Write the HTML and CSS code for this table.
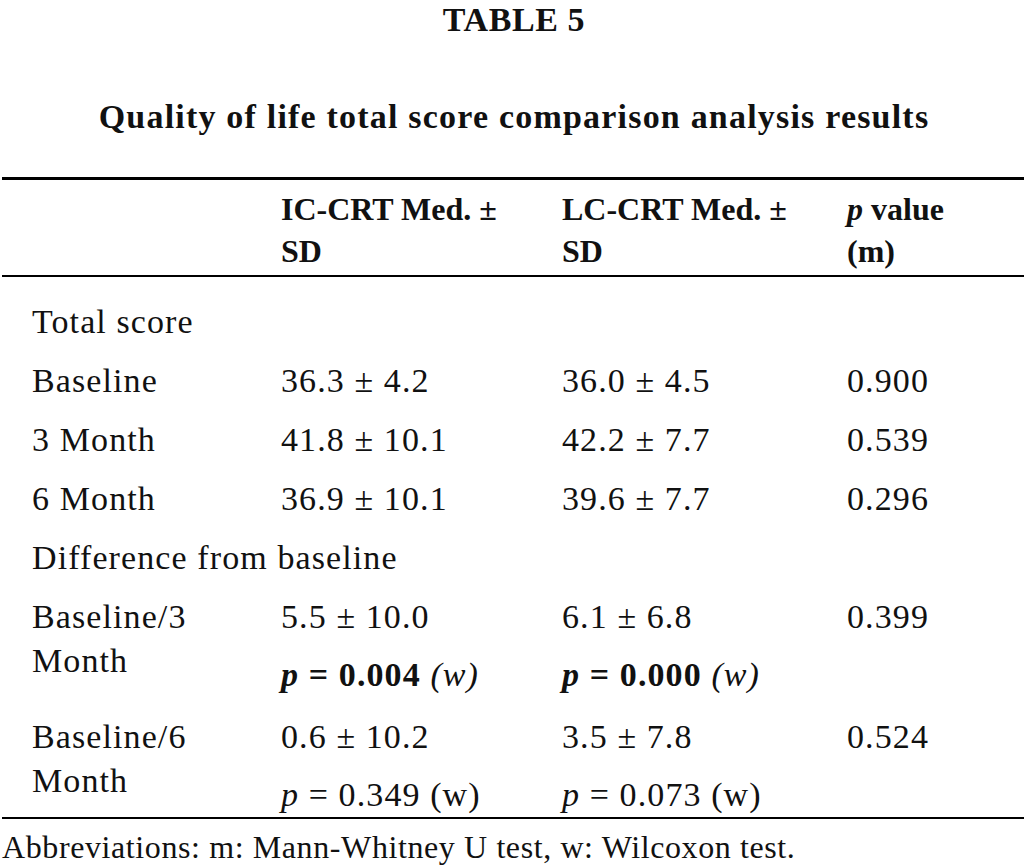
FILE: index.html
```html
<!DOCTYPE html>
<html lang="en">
<head>
<meta charset="utf-8">
<title>Table 5</title>
<link rel="stylesheet" href="styles.css">
</head>
<body>
<div class="page">
  <h1 class="label">TABLE 5</h1>
  <h2 class="caption">Quality of life total score comparison analysis results</h2>
  <table class="data">
    <colgroup>
      <col class="c1"><col class="c2"><col class="c3"><col class="c4">
    </colgroup>
    <thead>
      <tr>
        <th></th>
        <th>IC-CRT Med. ± SD</th>
        <th>LC-CRT Med. ± SD</th>
        <th><i>p</i> value<br>(m)</th>
      </tr>
    </thead>
    <tbody>
      <tr class="first"><td colspan="4">Total score</td></tr>
      <tr><td>Baseline</td><td>36.3 ± 4.2</td><td>36.0 ± 4.5</td><td>0.900</td></tr>
      <tr><td>3 Month</td><td>41.8 ± 10.1</td><td>42.2 ± 7.7</td><td>0.539</td></tr>
      <tr><td>6 Month</td><td>36.9 ± 10.1</td><td>39.6 ± 7.7</td><td>0.296</td></tr>
      <tr><td colspan="4">Difference from baseline</td></tr>
      <tr>
        <td>Baseline/3 Month</td>
        <td><p>5.5 ± 10.0</p><p class="sig"><b><i>p</i> = 0.004</b> <i>(w)</i></p></td>
        <td><p>6.1 ± 6.8</p><p class="sig"><b><i>p</i> = 0.000</b> <i>(w)</i></p></td>
        <td>0.399</td>
      </tr>
      <tr class="last">
        <td>Baseline/6 Month</td>
        <td><p>0.6 ± 10.2</p><p><i>p</i> = 0.349 (w)</p></td>
        <td><p>3.5 ± 7.8</p><p><i>p</i> = 0.073 (w)</p></td>
        <td>0.524</td>
      </tr>
    </tbody>
  </table>
  <p class="note">Abbreviations: m: Mann-Whitney U test, w: Wilcoxon test.</p>
</div>
</body>
</html>
```

FILE: styles.css
```css
html, body {
  margin: 0;
  padding: 0;
  background: #ffffff;
}

body {
  font-family: "Liberation Serif", "Times New Roman", serif;
  color: #111111;
}

.page {
  width: 1028px;
  padding-top: 0;
}

.label {
  margin: 0;
  text-align: center;
  font-size: 34px;
  line-height: 40px;
  font-weight: bold;
  letter-spacing: 0.6px;
}

.caption {
  margin: 57px 0 0;
  text-align: center;
  font-size: 34px;
  line-height: 40px;
  font-weight: bold;
  letter-spacing: 1.2px;
}

.data {
  margin: 40px 0 0 2px;
  width: 1022px;
  table-layout: fixed;
  border-collapse: collapse;
  border-top: 3px solid #000;
  border-bottom: 2px solid #000;
}

.c1 { width: 262px; }
.c2 { width: 281px; }
.c3 { width: 285px; }
.c4 { width: 194px; }

.data th {
  text-align: left;
  vertical-align: top;
  font-size: 32px;
  line-height: 42px;
  font-weight: bold;
  padding: 8px 20px 3px 17px;
  border-bottom: 2px solid #000;
}

.data th:first-child { padding-left: 30px; }

.data td {
  text-align: left;
  vertical-align: top;
  font-size: 34px;
  line-height: 44px;
  letter-spacing: 1.1px;
  padding: 15px 8px 0 17px;
}

.data td:first-child { padding-left: 30px; padding-right: 20px; }

.data tr.first td { padding-top: 23px; }
.data tr.last td { padding-top: 18px; padding-bottom: 0; }

.data td p {
  margin: 0;
}

.data td p + p {
  margin-top: 14px;
}

.note {
  margin: 8px 0 0 2px;
  font-size: 32px;
  line-height: 40px;
  letter-spacing: 0.6px;
}
```
